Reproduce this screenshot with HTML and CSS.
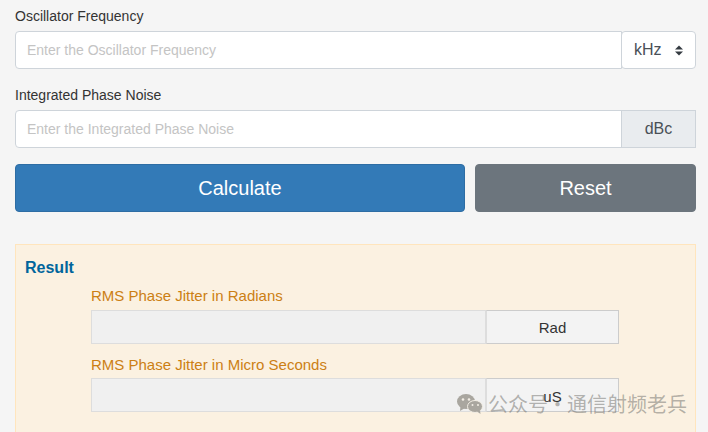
FILE: index.html
```html
<!DOCTYPE html>
<html lang="en">

<head>
    <meta charset="UTF-8">
    <meta name="viewport" content="width=device-width, initial-scale=1.0">
    <title>RMS Phase Jitter Calculator</title>
    <link rel="stylesheet" href="styles.css">
</head>

<body>

    <!-- Inputs -->
    <div class="field">
        <label class="field-label">Oscillator Frequency</label>
        <div class="input-group">
            <input class="text-input" type="text" placeholder="Enter the Oscillator Frequency">
            <div class="unit-select">
                <span>kHz</span>
                <svg class="sort-icon" width="8" height="11" viewBox="0 0 8 11">
                    <path d="M4 0.5 L8 4.5 L0 4.5 Z M0 6.5 L8 6.5 L4 10.5 Z" fill="#343a40"></path>
                </svg>
            </div>
        </div>
    </div>

    <div class="field">
        <label class="field-label">Integrated Phase Noise</label>
        <div class="input-group">
            <input class="text-input" type="text" placeholder="Enter the Integrated Phase Noise">
            <div class="unit-addon">dBc</div>
        </div>
    </div>

    <!-- Buttons -->
    <div class="actions">
        <button class="btn btn-primary" type="button">Calculate</button>
        <button class="btn btn-secondary" type="button">Reset</button>
    </div>

    <!-- Result Section -->
    <div class="result">
        <div class="result-title">Result</div>
        <div class="result-rows">
            <div class="result-label">RMS Phase Jitter in Radians</div>
            <div class="result-row">
                <div class="result-value"></div>
                <div class="result-unit">Rad</div>
            </div>
            <div class="result-label result-label-tight">RMS Phase Jitter in Micro Seconds</div>
            <div class="result-row">
                <div class="result-value"></div>
                <div class="result-unit result-unit-low">uS</div>
            </div>
        </div>
    </div>

    <!-- Watermark -->
    <div class="watermark">
        <svg width="26" height="20" viewBox="0 0 26 20">
            <ellipse cx="9" cy="7.5" rx="9" ry="7.5" fill="#a9a69f"></ellipse>
            <path d="M3.5 12 L3 17 L8 14 Z" fill="#a9a69f"></path>
            <ellipse cx="18" cy="12.5" rx="7.5" ry="6" fill="#a9a69f" stroke="#f3eee5" stroke-width="1"></ellipse>
            <path d="M20 17.5 L23.5 20 L23 16 Z" fill="#a9a69f"></path>
            <circle cx="6" cy="5.5" r="1.3" fill="#f3eee5"></circle>
            <circle cx="12" cy="5.5" r="1.3" fill="#f3eee5"></circle>
            <circle cx="15.5" cy="11" r="1" fill="#f3eee5"></circle>
            <circle cx="21" cy="11" r="1" fill="#f3eee5"></circle>
        </svg>
        <span>公众号 · 通信射频老兵</span>
    </div>

</body>

</html>
```

FILE: styles.css
```css
* {
    box-sizing: border-box;
}

html,
body {
    margin: 0;
    height: 432px;
    overflow: hidden;
}

body {
    position: relative;
    padding: 8px 12px 0 15px;
    background-color: #f5f5f5;
    font-family: "Liberation Sans", Arial, sans-serif;
    color: #333333;
}

/* Form fields */
.field {
    margin-bottom: 18px;
}

.field-label {
    display: block;
    height: 23px;
    font-size: 14px;
    line-height: 16px;
    color: #333333;
}

.input-group {
    display: flex;
    height: 38px;
}

.text-input {
    flex: 1;
    min-width: 0;
    height: 38px;
    padding: 6px 11px;
    border: 1px solid #ced4da;
    border-radius: 4px 0 0 4px;
    background-color: #ffffff;
    font-family: inherit;
    font-size: 14px;
    outline: none;
}

.text-input::placeholder {
    color: #c4c4c4;
    opacity: 1;
}

.unit-select {
    display: flex;
    justify-content: space-between;
    align-items: center;
    width: 75px;
    margin-left: -1px;
    padding: 0 12px 0 12px;
    border: 1px solid #ced4da;
    border-radius: 4px;
    background-color: #ffffff;
    font-size: 16px;
    color: #495057;
}

.unit-addon {
    display: flex;
    justify-content: center;
    align-items: center;
    width: 75px;
    margin-left: -1px;
    border: 1px solid #ced4da;
    background-color: #e9ecef;
    font-size: 16px;
    color: #495057;
}

/* Buttons */
.actions {
    display: flex;
    gap: 10px;
    margin-top: -2px;
}

.btn {
    height: 48px;
    border-radius: 4px;
    font-family: inherit;
    font-size: 20px;
    color: #ffffff;
}

.btn-primary {
    width: 450px;
    border: 1px solid #2e6da4;
    background-color: #337ab7;
}

.btn-secondary {
    width: 221px;
    border: 1px solid #6c757d;
    background-color: #6c757d;
}

/* Result Section */
.result {
    height: 200px;
    margin-top: 32px;
    padding: 14px 9px 0;
    border: 1px solid #ffe5bd;
    background-color: #fbf1e1;
}

.result-title {
    font-size: 16px;
    font-weight: bold;
    line-height: 18px;
    color: #00659c;
}

.result-rows {
    padding: 10px 0 0 66px;
}

.result-label {
    height: 23px;
    font-size: 15px;
    line-height: 17px;
    color: #cc7f14;
}

.result-label-tight {
    height: 22px;
}

.result-row {
    display: flex;
    width: 528px;
    height: 34px;
    margin-bottom: 12px;
}

.result-value {
    flex: 1;
    border: 1px solid #dddddd;
    background-color: #f0f0f0;
}

.result-unit {
    display: flex;
    justify-content: center;
    align-items: center;
    width: 133px;
    border: 1px solid #cccccc;
    border-left-color: #dddddd;
    background-color: #f3f3f3;
    font-size: 15px;
    color: #333333;
}

.result-unit-low {
    padding-top: 3px;
}

/* Watermark sits over the page */
.watermark {
    position: absolute;
    left: 457px;
    top: 390px;
    display: flex;
    align-items: center;
    gap: 5px;
    font-family: "Noto Sans CJK SC", sans-serif;
    font-size: 20px;
    line-height: 28px;
    word-spacing: -5px;
    color: rgba(120, 120, 115, 0.55);
    white-space: nowrap;
}
```
